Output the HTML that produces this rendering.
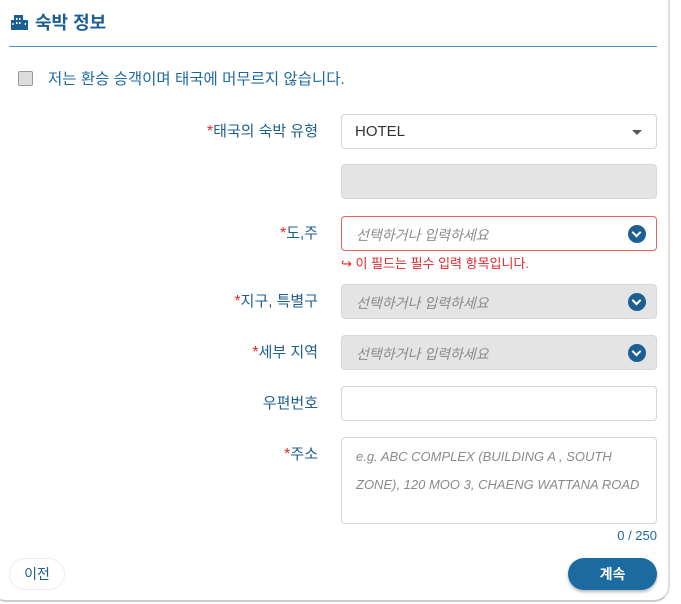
<!DOCTYPE html>
<html><head><meta charset="utf-8"><style>
*{box-sizing:border-box;margin:0;padding:0}
body{width:681px;height:604px;background:#fff;font-family:"Liberation Sans","Noto Sans CJK KR",sans-serif;position:relative;overflow:hidden}
.card{position:absolute;left:-10px;top:-10px;width:680px;height:612px;background:#fff;border-radius:0 0 16px 16px;border-right:2px solid #ddd;border-bottom:2px solid #ccc}
.a{position:absolute}
.lbl{position:absolute;right:363px;font-size:15px;color:#1d5f8f;text-align:right;white-space:nowrap}
.lbl b{color:#e3262a;font-weight:normal;font-size:16px}
.inp{position:absolute;left:341px;width:316px;height:35px;border:1px solid #d6d6d6;border-radius:4px;background:#fff}
.gray{background:#e4e4e4;border-color:#d8d8d8}
.ph{position:absolute;left:14px;top:8px;font-size:14px;color:#8a8a8a;font-style:italic}
.dd{position:absolute;right:10px;top:8px;width:18px;height:18px;border-radius:50%;background:#1b5f94}
.dd:after{content:"";position:absolute;left:5px;top:4px;width:5px;height:5px;border-right:2px solid #fff;border-bottom:2px solid #fff;transform:rotate(45deg)}
</style></head><body>
<div class="card"></div>
<svg class="a" style="left:11px;top:15px" width="17" height="15" viewBox="0 0 17 15" fill="#1b5f94"><rect x="3" y="0" width="9" height="15"/><rect x="0" y="5" width="4" height="10"/><rect x="12" y="5" width="5" height="10"/><g fill="#fff"><rect x="5" y="3" width="1.5" height="2"/><rect x="8" y="3" width="1.5" height="2"/><rect x="5" y="7" width="1.5" height="2"/><rect x="8" y="7" width="1.5" height="2"/><rect x="1.3" y="8" width="1.3" height="2"/><rect x="13.7" y="8" width="1.3" height="2"/></g></svg>
<div class="a" style="left:35px;top:9px;font-size:18px;font-weight:bold;color:#1b5f94">숙박 정보</div>
<div class="a" style="left:9px;top:46px;width:648px;height:1px;background:#4d8fc6"></div>
<div class="a" style="left:18px;top:71px;width:15px;height:15px;border:1px solid #999;border-radius:2px;background:#ddd"></div>
<div class="a" style="left:48px;top:67px;font-size:15.5px;color:#1d6aa3">저는 환승 승객이며 태국에 머무르지 않습니다.</div>

<div class="lbl" style="top:120px"><b>*</b>태국의 숙박 유형</div>
<div class="inp" style="top:114px"><span class="a" style="left:13px;top:8px;font-size:15px;color:#333">HOTEL</span><span class="a" style="right:14px;top:15px;border:5px solid transparent;border-top:5px solid #555;border-bottom:0"></span></div>
<div class="inp gray" style="top:164px"></div>

<div class="lbl" style="top:222px"><b>*</b>도,주</div>
<div class="inp" style="top:216px;border-color:#f06060"><span class="ph">선택하거나 입력하세요</span><span class="dd"></span></div>
<div class="a" style="left:341px;top:253px;font-size:13px;color:#e3262a">↪ 이 필드는 필수 입력 항목입니다.</div>

<div class="lbl" style="top:290px"><b>*</b>지구, 특별구</div>
<div class="inp gray" style="top:284px"><span class="ph">선택하거나 입력하세요</span><span class="dd"></span></div>

<div class="lbl" style="top:341px"><b>*</b>세부 지역</div>
<div class="inp gray" style="top:335px"><span class="ph">선택하거나 입력하세요</span><span class="dd"></span></div>

<div class="lbl" style="top:392px">우편번호</div>
<div class="inp" style="top:386px"></div>

<div class="lbl" style="top:443px"><b>*</b>주소</div>
<div class="inp" style="top:437px;height:87px"><span class="ph" style="top:5px;line-height:28px;font-size:13px;width:290px">e.g. ABC COMPLEX (BUILDING A , SOUTH ZONE), 120 MOO 3, CHAENG WATTANA ROAD</span></div>
<div class="a" style="right:24px;top:528px;font-size:13px;color:#1d6aa3">0 / 250</div>

<div class="a" style="left:9px;top:558px;width:56px;height:32px;border:1px solid #eee;border-radius:16px;font-size:14px;color:#1d5f8f;text-align:center;line-height:30px">이전</div>
<div class="a" style="left:568px;top:558px;width:89px;height:32px;background:#1b6aa0;border-radius:16px;font-size:14px;font-weight:bold;color:#fff;text-align:center;line-height:32px;box-shadow:0 2px 3px rgba(0,0,0,.3)">계속</div>
</body></html>
